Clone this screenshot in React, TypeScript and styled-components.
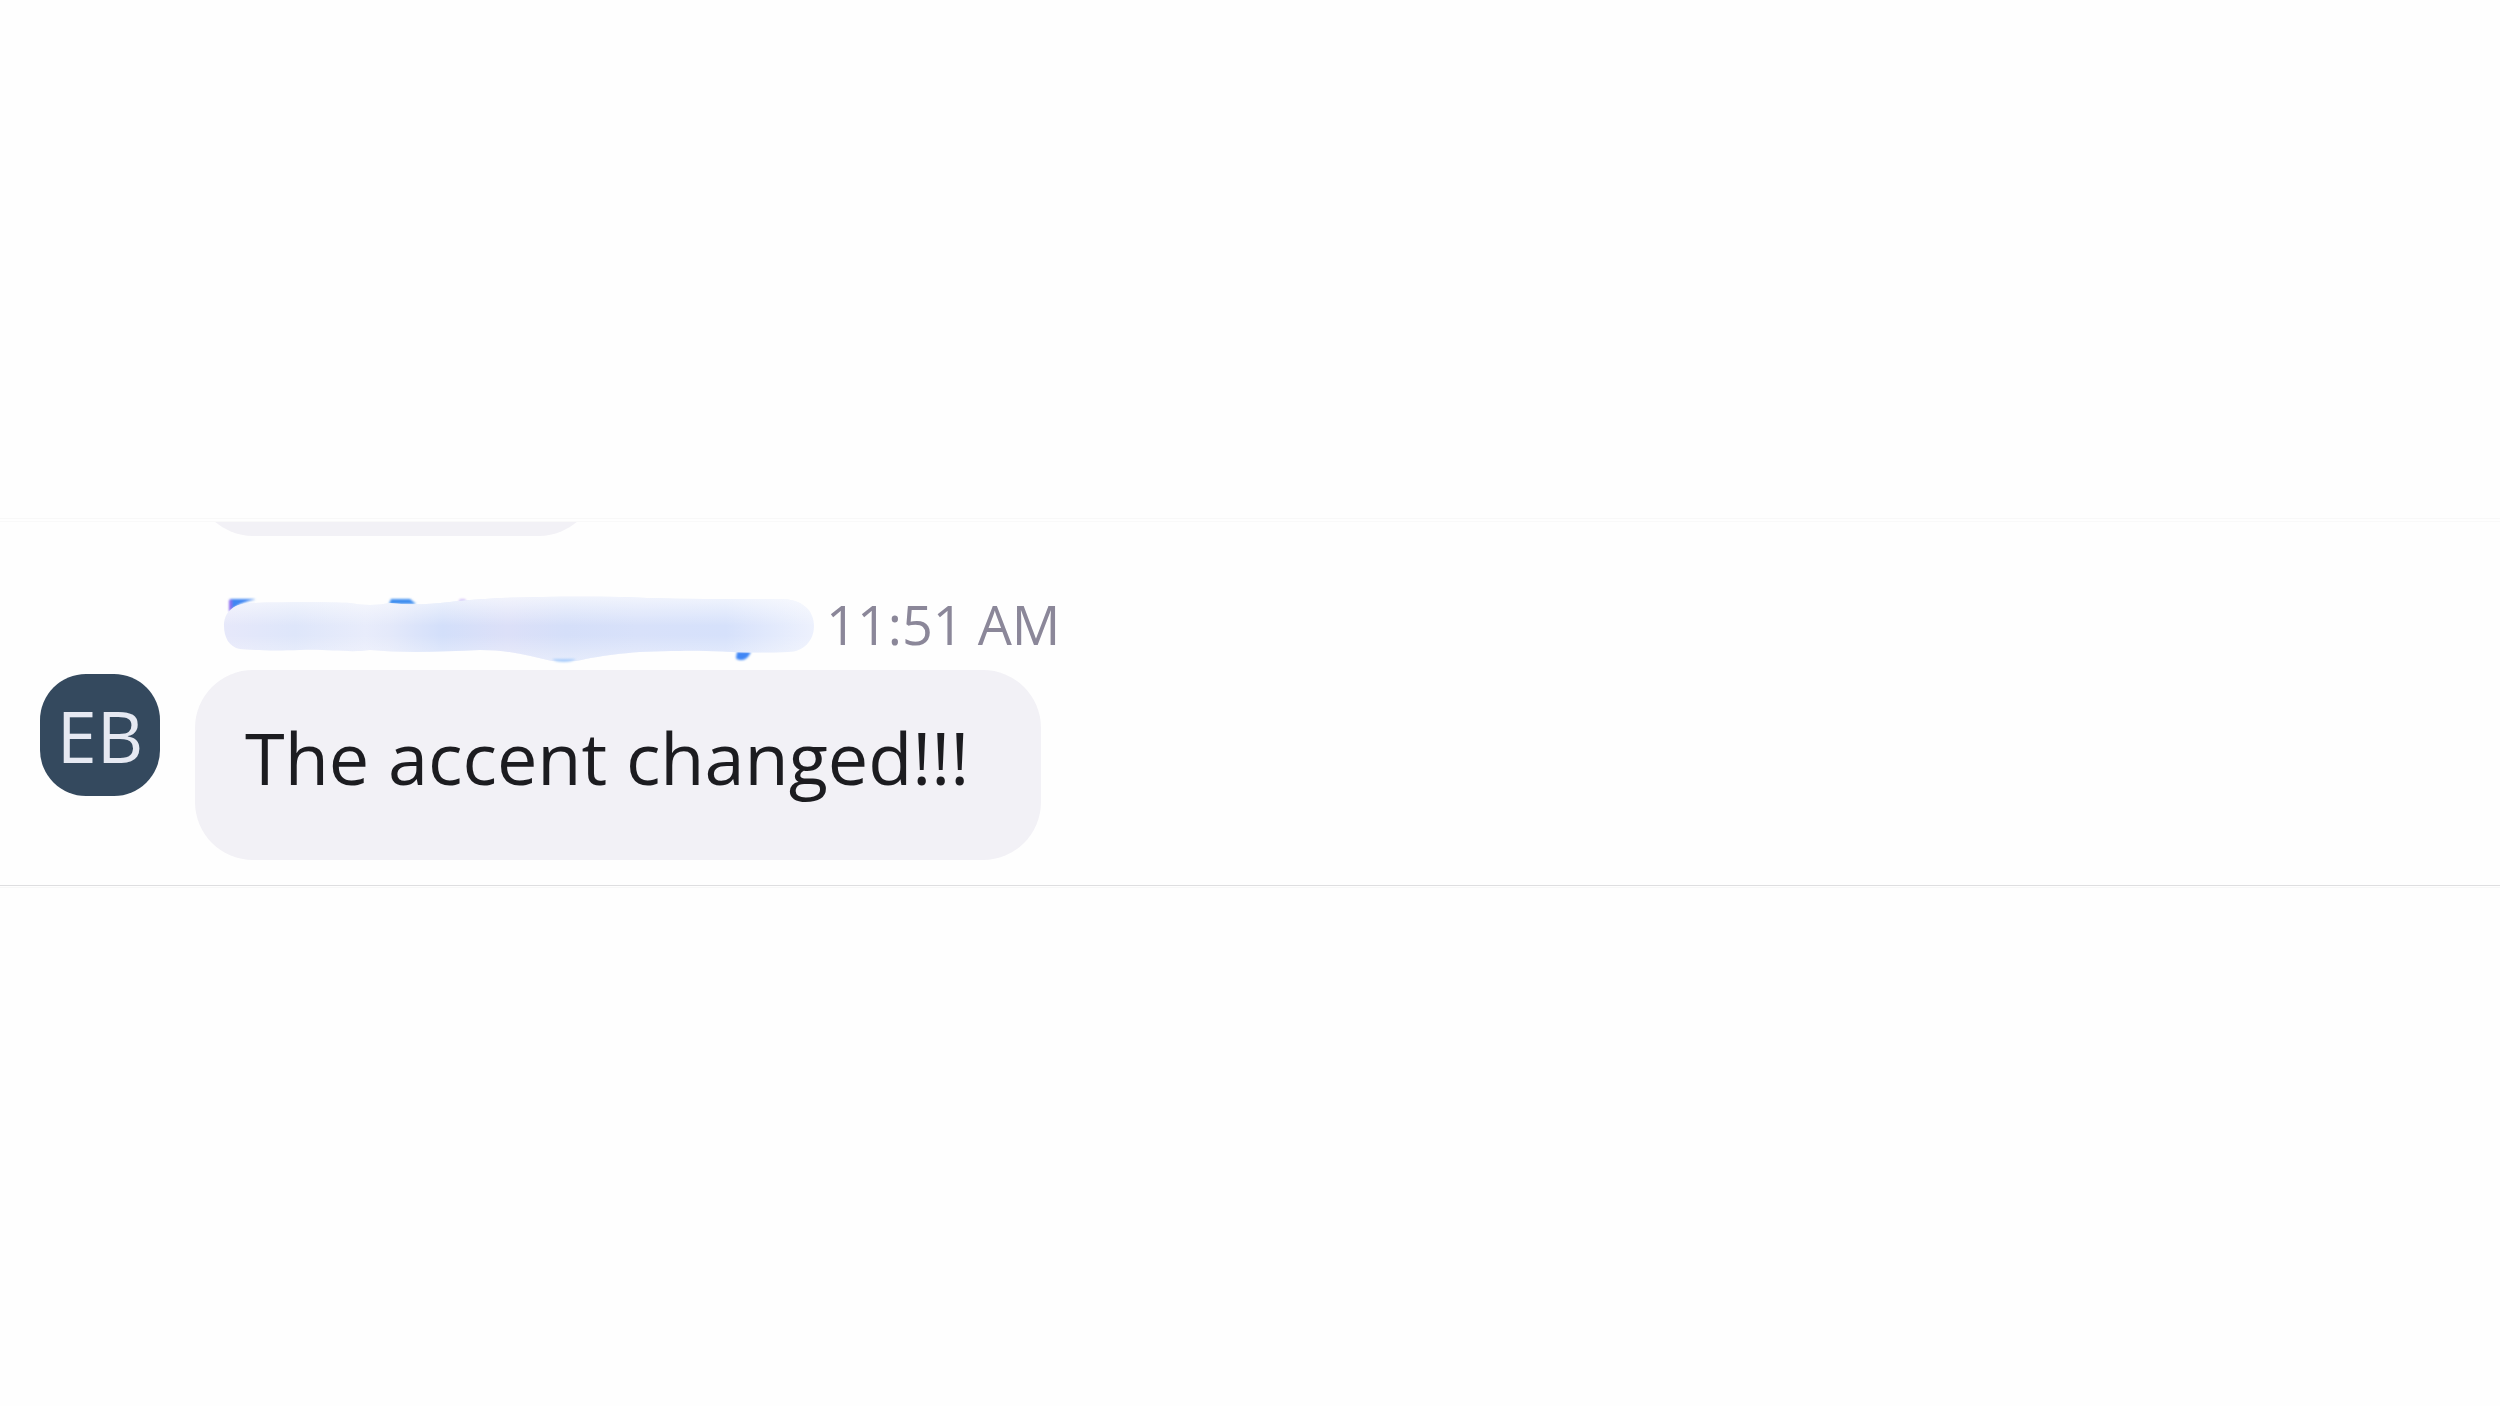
import React from "react";
import styled, { createGlobalStyle } from "styled-components";

const GlobalStyle = createGlobalStyle`
  * { box-sizing: border-box; }
  body {
    margin: 0;
    background: #fefefe;
    font-family: "Open Sans", "Noto Sans", sans-serif;
  }
`;

const Page = styled.main`
  min-height: 100vh;
  display: flex;
  flex-direction: column;
  justify-content: center;
`;

const ChatStrip = styled.section`
  padding: 2px 0 1px;
  border-top: 1px solid #f8f8f8;
  border-bottom: 1px solid #f8f8f8;
`;

const MessageList = styled.div`
  padding: 0 40px 25px;
  border-top: 1px solid #f9f9f9;
  border-bottom: 1px solid #dedee0;
`;

const Row = styled.div`
  display: grid;
  grid-template-columns: 120px 1fr;
  column-gap: 35px;
  align-items: start;
`;

const ScrolledRow = styled(Row)`
  grid-template-rows: 14px;
  overflow: hidden;
  align-items: end;
`;

const Bubble = styled.div`
  grid-column: 2;
  justify-self: start;
  min-width: 402px;
  min-height: 190px;
  padding: 38px 72px 54px 50px;
  border-radius: 58px;
  background: #f2f1f6;
  color: #1c1c20;
  font-size: 72px;
  line-height: 98px;
`;

const Header = styled.div`
  grid-column: 2;
  display: flex;
  align-items: flex-start;
  gap: 10px;
  height: 76px;
  margin-top: 58px;
  padding-left: 25px;
`;

const Time = styled.time`
  color: #8b8799;
  font-size: 54px;
  line-height: 60px;
`;

const Avatar = styled.div`
  display: flex;
  align-items: center;
  justify-content: center;
  height: 122px;
  margin-top: 4px;
  border-radius: 46px;
  background: #34495e;
  color: #e6e9f2;
  font-size: 72px;
  line-height: 122px;
`;

const Smear = styled.svg`
  display: block;
  flex: none;
  margin-top: 2px;
`;

function HiddenName() {
  return (
    <Smear width="596" height="68" viewBox="220 596 596 68" role="img" aria-label="Hidden name">
      <defs>
        <linearGradient id="tint" x1="224" x2="814" y1="0" y2="0" gradientUnits="userSpaceOnUse">
          <stop offset="0" stopColor="#e6e8fa" />
          <stop offset="0.12" stopColor="#dee6fa" />
          <stop offset="0.24" stopColor="#e8ecfb" />
          <stop offset="0.28" stopColor="#e4e9fa" />
          <stop offset="0.37" stopColor="#d3dffa" />
          <stop offset="0.48" stopColor="#dce0f8" />
          <stop offset="0.58" stopColor="#d5dff9" />
          <stop offset="0.7" stopColor="#d8e1fa" />
          <stop offset="0.85" stopColor="#d6e1fb" />
          <stop offset="1" stopColor="#edf1fd" />
        </linearGradient>
        <linearGradient id="fade" x1="0" x2="0" y1="597" y2="661" gradientUnits="userSpaceOnUse">
          <stop offset="0" stopColor="#fefefe" stopOpacity="0.65" />
          <stop offset="0.45" stopColor="#fefefe" stopOpacity="0" />
          <stop offset="0.6" stopColor="#fefefe" stopOpacity="0" />
          <stop offset="1" stopColor="#fefefe" stopOpacity="0.4" />
        </linearGradient>
        <filter id="soft" x="-20%" y="-50%" width="140%" height="200%">
          <feGaussianBlur stdDeviation="1" />
        </filter>
        <path
          id="stroke"
          d="M224 626 C224 614 231 604 250 603 C285 602 330 602 350 603 Q370 607 390 603 Q415 606 450 602 C490 597 560 596 620 597 Q690 600 780 599 C803 599 814 611 814 626 C814 641 803 652 788 652 C740 654 710 650 680 651 C630 651 605 655 576 661 L552 661 C530 656 510 650 480 650 C440 652 400 653 370 650 C350 653 330 649 300 650 C270 651 250 650 240 649 C229 647 224 637 224 626 Z"
        />
      </defs>
      <g filter="url(#soft)">
        <path d="M230 599 H256 Q240 602 230 611 Z" fill="#3f86f2" />
        <path d="M229 600 h3 v9 l-3 3 Z" fill="#8c6cf0" />
        <path d="M391 599 h19 l6 5 h-27 Z" fill="#3f8ff0" />
        <path d="M460 599 h5 l2 4 h-9 Z" fill="#d5c6f8" />
        <path d="M737 652 h14 q-4 8 -9 8 q-5 0 -6 -2 Z" fill="#3f86f5" />
      </g>
      <use href="#stroke" fill="url(#tint)" />
      <use href="#stroke" fill="url(#fade)" />
      <path d="M552 659 H576 Q572 662 564 662 Q555 662 552 659 Z" fill="#a9cdfb" filter="url(#soft)" />
    </Smear>
  );
}

export default function App() {
  return (
    <>
      <GlobalStyle />
      <Page>
        <ChatStrip>
          <MessageList>
            <ScrolledRow>
              <Bubble />
            </ScrolledRow>
            <Row>
              <Header>
                <HiddenName />
                <Time dateTime="11:51">11:51 AM</Time>
              </Header>
              <Avatar>EB</Avatar>
              <Bubble>The accent changed!!!</Bubble>
            </Row>
          </MessageList>
        </ChatStrip>
      </Page>
    </>
  );
}
